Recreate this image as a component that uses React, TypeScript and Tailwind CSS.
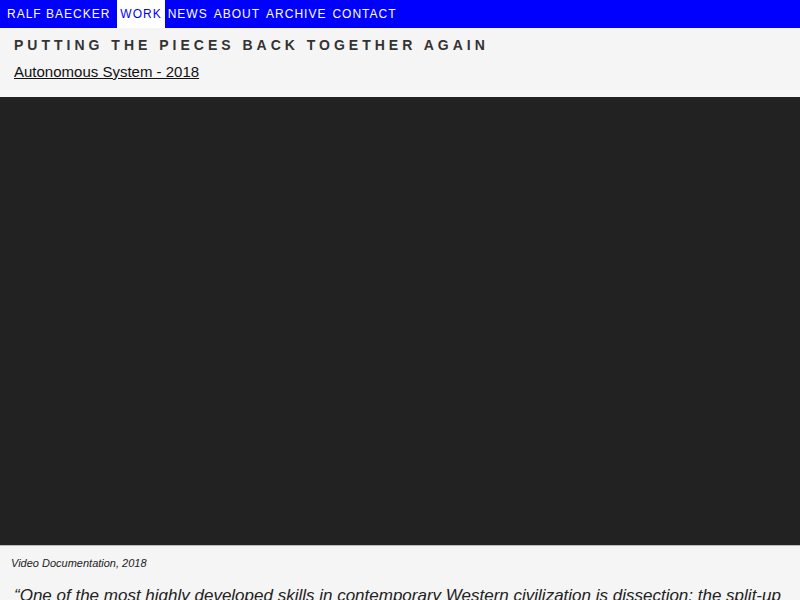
import React from 'react'

const navItems = ['WORK', 'NEWS', 'ABOUT', 'ARCHIVE', 'CONTACT']

export default function App() {
  return (
    <div className="min-h-screen bg-[#f5f5f5] font-['Liberation_Sans',Arial,sans-serif] overflow-hidden">
      <nav className="flex h-[28px] bg-[#0000ff] pl-[4px] text-[12px] leading-[28px] tracking-[1px] text-white">
        <a className="px-[3px] mr-[4px]">RALF BAECKER</a>
        {navItems.map((item) => (
          <a key={item} className={item === 'WORK' ? 'bg-white px-[3px] text-[#0000ff]' : 'px-[3px]'}>
            {item}
          </a>
        ))}
      </nav>

      <header className="px-[14px] pt-[7px] pb-[15px]">
        <h1 className="text-[14px] leading-[20px] font-bold tracking-[4px] text-[#333]">
          PUTTING THE PIECES BACK TOGETHER AGAIN
        </h1>
        <a className="mt-[7px] block text-[15px] leading-[20px] text-[#111] underline">
          Autonomous System - 2018
        </a>
      </header>

      <div className="h-[449px] bg-[#222] border-b border-[#bbb]" />

      <p className="px-[11px] pt-[9px] text-[11px] leading-[16px] italic text-[#222]">
        Video Documentation, 2018
      </p>

      <blockquote className="pl-[14px] pr-[8px] pt-[12px] text-[17px] leading-[26px] italic text-[#222]">
        “One of the most highly developed skills in contemporary Western civilization is dissection: the split-up of problems into their smallest possible components.”
      </blockquote>
    </div>
  )
}
